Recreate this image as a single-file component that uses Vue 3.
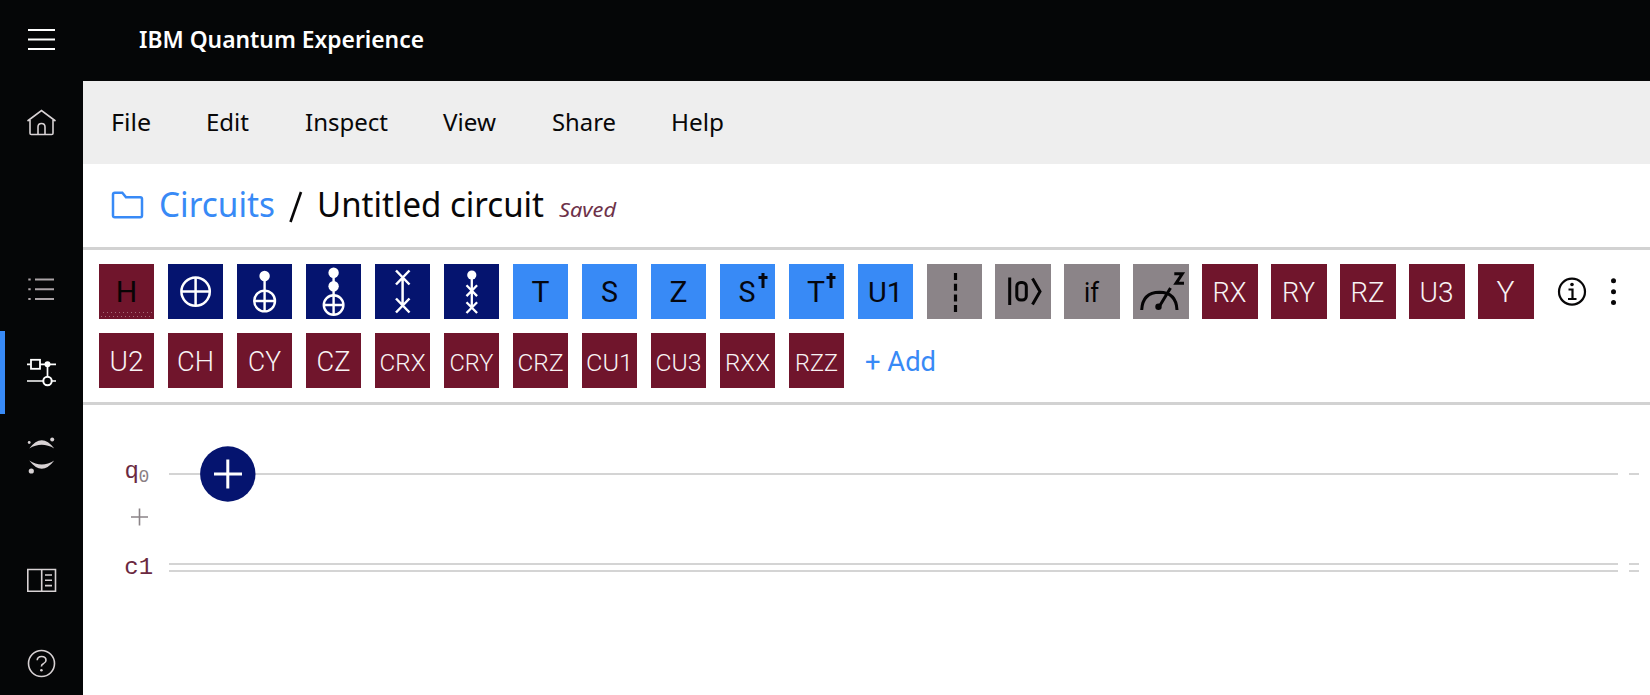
<script setup>
const menu = [
  { label: 'File', w: 40, gap: 55 },
  { label: 'Edit', w: 43, gap: 56 },
  { label: 'Inspect', w: 83, gap: 55 },
  { label: 'View', w: 53, gap: 56 },
  { label: 'Share', w: 64, gap: 54.5 },
  { label: 'Help', w: 53, gap: 0 },
]

const word = (t, w, kind = 'maroon', size = 27, y = 38, x = 27.5) => ({ t, w, kind, size, y, x })
const glyph = (icon, kind) => ({ icon, kind })

const rows = [
  [
    glyph('h', 'maroon'),
    glyph('not', 'navy'),
    glyph('cnot', 'navy'),
    glyph('ccnot', 'navy'),
    glyph('swap', 'navy'),
    glyph('cswap', 'navy'),
    word('T', 18, 'blue', 30),
    word('S', 17, 'blue', 30),
    word('Z', 18, 'blue', 30),
    { ...word('S', 17, 'blue', 30, 38, 27), dagger: 43 },
    { ...word('T', 18, 'blue', 30, 38, 27), dagger: 42 },
    word('U1', 35, 'blue', 28),
    glyph('barrier', 'gray'),
    glyph('reset', 'gray'),
    word('if', 15, 'gray', 27),
    glyph('measure', 'gray'),
    word('RX', 34),
    word('RY', 33),
    word('RZ', 34),
    word('U3', 34),
    word('Y', 18, 'maroon', 30),
  ],
  [
    word('U2', 34, 'maroon', 27),
    word('CH', 37, 'maroon', 27),
    word('CY', 33, 'maroon', 27),
    word('CZ', 34, 'maroon', 27),
    word('CRX', 46, 'maroon', 24),
    word('CRY', 44, 'maroon', 24),
    word('CRZ', 46, 'maroon', 24),
    word('CU1', 47, 'maroon', 24),
    word('CU3', 46, 'maroon', 24),
    word('RXX', 45, 'maroon', 24),
    word('RZZ', 43, 'maroon', 24),
  ],
]
</script>

<template>
  <div class="shell">
    <header class="topbar">
      <button class="navbtn" aria-label="Menu">
        <svg width="83" height="81" class="bright"><path d="M28 30h27M28 39.5h27M28 49h27" stroke-width="2" /></svg>
      </button>
      <svg class="brand" width="290" height="81">
        <text x="0" y="48" textLength="285" lengthAdjust="spacingAndGlyphs">IBM Quantum Experience</text>
      </svg>
    </header>

    <div class="body">
      <nav class="side">
        <a class="item home">
          <svg width="83" height="83">
            <path d="M27.5 40 41.5 29.5 55.5 40M30 39v13.2q0 1.3 1.3 1.3h20.4q1.3 0 1.3-1.3V39M38 53V46q0-3.5 3.5-3.5T45 46v7" />
          </svg>
        </a>
        <a class="item">
          <svg width="83" height="83">
            <path d="M28.3 31.5h2.4M28.3 41.3h2.4M28.3 51h2.4M35 31.5h19M35 41.3h19M35 51h19" class="dim" stroke-width="2" />
          </svg>
        </a>
        <a class="item active">
          <svg width="83" height="83" class="bright">
            <path d="M27 33.3h3.5M40 33.3h16M27 50h16M52 50h4M47.5 34v11.5" stroke-width="1.7" />
            <rect x="31" y="28.8" width="9" height="9" stroke-width="1.8" />
            <circle cx="47.5" cy="33.3" r="3" fill="#fff" stroke="none" />
            <circle cx="47.5" cy="50" r="4.2" stroke-width="2" />
          </svg>
        </a>
        <a class="item">
          <svg width="83" height="83" class="solid">
            <path d="M29.3 34.5Q41.7 18 54.3 34.5 41.7 27 29.3 34.5ZM29.3 46.5Q41.7 63 54.3 46.5 41.7 54.5 29.3 46.5Z" />
            <circle cx="29.2" cy="28.5" r="1.4" />
            <circle cx="52.2" cy="25.6" r="2" />
            <circle cx="31.3" cy="57" r="2.6" />
          </svg>
        </a>
        <a class="item docs">
          <svg width="83" height="83">
            <path d="M27.8 30.5h27.7v21.7H27.8zM41.7 30.5v21.7M45 36h7M45 41.3h7M45 46.6h7" />
          </svg>
        </a>
        <a class="item">
          <svg width="83" height="83">
            <circle cx="41.5" cy="41.5" r="13" />
            <path d="M37.2 38.3q.2-3.8 4.4-3.8 4.4 0 4.4 3.7 0 2-2.3 3.2-2.3 1-2.3 3.2" />
            <circle cx="41.4" cy="48.2" r="1.3" fill="#d8d2d4" stroke="none" />
          </svg>
        </a>
      </nav>

      <main>
        <div class="menubar">
          <svg v-for="m in menu" :key="m.label" :width="m.w" height="83" :style="{ marginRight: m.gap + 'px' }">
            <text x="0" y="50" :textLength="m.w" lengthAdjust="spacingAndGlyphs">{{ m.label }}</text>
          </svg>
        </div>

        <div class="crumbs">
          <svg class="folder" width="34" height="30">
            <path d="M2 4.5q0-1.8 1.8-1.8h7.5L15 7.2h14.2q1.8 0 1.8 1.8v16.4q0 1.8-1.8 1.8H3.8Q2 27.2 2 25.4Z" />
          </svg>
          <svg class="link" width="116" height="83"><text y="53" textLength="116" lengthAdjust="spacingAndGlyphs">Circuits</text></svg>
          <svg class="slash" width="14" height="83"><path d="M1.5 58 12 28" /></svg>
          <svg class="name" width="227" height="83"><text y="53" textLength="227" lengthAdjust="spacingAndGlyphs">Untitled circuit</text></svg>
          <svg class="saved" width="57" height="83"><text y="53" textLength="57" lengthAdjust="spacingAndGlyphs">Saved</text></svg>
        </div>

        <section class="palette">
          <div v-for="(row, ri) in rows" :key="ri" class="row">
            <div v-for="(g, i) in row" :key="i" class="gate" :class="g.kind">
              <svg viewBox="0 0 55 55" width="55" height="55">
                <template v-if="g.t">
                  <text :x="g.x - g.w / 2" :y="g.y" :font-size="g.size" :textLength="g.w" lengthAdjust="spacingAndGlyphs">{{ g.t }}</text>
                  <path v-if="g.dagger" :d="`M${g.dagger} 9v15M${g.dagger - 4.5} 13.5h9`" stroke-width="3" />
                </template>
                <g v-else-if="g.icon === 'h'">
                  <text x="16.8" y="38" font-size="29.5" textLength="21.5" lengthAdjust="spacingAndGlyphs" class="ink">H</text>
                  <path d="M4 48.5h50M2 52.5h52" class="grain" />
                </g>
                <g v-else-if="g.icon === 'not'" stroke-width="2.5">
                  <circle cx="27.6" cy="27.6" r="14.2" /><path d="M27.6 13v29M13 27.6h29" />
                </g>
                <g v-else-if="g.icon === 'cnot'" stroke-width="2.4">
                  <circle cx="27.6" cy="12" r="5.2" class="fill" /><circle cx="27.6" cy="37" r="10.4" />
                  <path d="M27.6 12v36M17 37h21" />
                </g>
                <g v-else-if="g.icon === 'ccnot'" stroke-width="2.4">
                  <circle cx="27.6" cy="8.7" r="5.2" class="fill" /><circle cx="27.6" cy="22.3" r="5.2" class="fill" />
                  <circle cx="27.6" cy="41" r="9.8" /><path d="M27.6 9v42M18 41h19.5" />
                </g>
                <g v-else-if="g.icon === 'swap'" stroke-width="2.5">
                  <path d="M27.6 13.5v28M21 6.5l13.5 14M34.5 6.5 21 20.5M21 34.5l13.5 14M34.5 34.5 21 48.5" />
                </g>
                <g v-else-if="g.icon === 'cswap'" stroke-width="2.3">
                  <circle cx="27.8" cy="11" r="4.6" class="fill" />
                  <path d="M27.8 11v33M22.5 21.3l10.6 10.8M33.1 21.3 22.5 32.1M22.5 38.2 33.1 49M33.1 38.2 22.5 49" />
                </g>
                <path v-else-if="g.icon === 'barrier'" d="M28.5 9v39" stroke-width="3.2" stroke-dasharray="7 3.7" />
                <g v-else-if="g.icon === 'reset'">
                  <path d="M14.7 13.5v27.5M37.5 14.5 45 27.5 37.5 40.5" stroke-width="3" />
                  <rect x="21.8" y="18.5" width="9.5" height="17.5" rx="4" stroke-width="3" />
                </g>
                <g v-else-if="g.icon === 'measure'">
                  <path d="M8.7 46Q9.5 28.5 26.5 28.3 43.2 28.5 44 46M26 43 37.5 24" stroke-width="3" />
                  <circle cx="25.5" cy="42.7" r="3.2" class="fill" />
                  <path d="M41.3 9.8h8L43 19.3h8" stroke-width="3" />
                </g>
              </svg>
            </div>
            <svg v-if="ri === 0" class="tools" width="70" height="55">
              <circle cx="19" cy="27.7" r="13" />
              <path d="M15.5 25.5h4v9M15 35h8.5" />
              <circle cx="19" cy="20.5" r="1.8" class="dot" />
              <circle cx="60.5" cy="16.7" r="2.5" class="dot" /><circle cx="60.5" cy="27.7" r="2.5" class="dot" /><circle cx="60.5" cy="38.5" r="2.5" class="dot" />
            </svg>
            <svg v-else class="add" width="72" height="55"><text y="37.7" textLength="71" lengthAdjust="spacingAndGlyphs">+ Add</text></svg>
          </div>
        </section>

        <svg class="circuit" width="1567" height="290">
          <path class="wire" d="M86 69h1449M1546 69h10M86 159h1449M1546 159h10M86 166h1449M1546 166h10" />
          <text x="41.5" y="73" class="reg">q</text>
          <text x="55.5" y="77" class="sub">0</text>
          <path d="M48 112h17M56.5 103.5v17" class="addq" />
          <text x="41.3" y="169.3" class="reg">c1</text>
          <circle cx="144.8" cy="69" r="27.7" class="node" />
          <path d="M131 69h28M144.8 54.5v29" class="plus" />
        </svg>
      </main>
    </div>
  </div>
</template>

<style>
body { margin: 0; background: #fff; overflow: hidden; }
</style>

<style scoped>
.shell { width: 1650px; height: 695px; overflow: hidden; display: flex; flex-direction: column; font-family: "Noto Sans", sans-serif; }
svg { display: block; flex: none; overflow: visible; }
.topbar { height: 81px; flex: none; background: #050607; display: flex; }
.navbtn { width: 83px; padding: 0; border: 0; background: none; }
.navbtn svg, .side svg { fill: none; stroke: #d8d2d4; stroke-width: 1.6; }
.navbtn svg.bright, .side svg.bright { stroke: #fff; }
.side svg.solid { fill: #d8d2d4; stroke: none; }
.dim { stroke: #aaa3a6; }
.brand { margin-left: 55.5px; fill: #fff; font-size: 23.5px; font-weight: 600; }
.body { flex: 1; display: flex; min-height: 0; }
.side { width: 83px; flex: none; background: #050607; display: flex; flex-direction: column; }
.item { height: 83px; flex: none; box-sizing: border-box; }
.home { margin-bottom: 84px; }
.docs { margin-top: 42px; }
.active { box-shadow: inset 5px 0 #388af6; }
main { width: 1567px; background: #fff; }
.menubar { height: 83px; box-sizing: border-box; padding-left: 28px; background: #eee; display: flex; fill: #080708; font-size: 23.5px; }
.crumbs { height: 86px; box-sizing: border-box; padding-left: 28px; border-bottom: 3px solid #d2d2d2; display: flex; font-size: 34px; }
.folder { margin-top: 25.5px; fill: none; stroke: #388af6; stroke-width: 2.5; }
.link { margin-left: 14px; fill: #388af6; }
.slash { margin-left: 14px; stroke: #080708; stroke-width: 2.6; }
.name { margin-left: 14px; fill: #080708; }
.saved { margin-left: 14.5px; fill: #6d3149; font-size: 20px; font-style: italic; }
.palette { height: 155px; box-sizing: border-box; padding: 14px 0 0 15.7px; border-bottom: 3px solid #d2d2d2; display: flex; flex-direction: column; gap: 14px; font-family: Roboto, sans-serif; }
.row { display: flex; gap: 13.8px; height: 55px; }
.gate { width: 55.2px; height: 55px; flex: none; --ink: #fff; }
.gate svg { fill: none; stroke: var(--ink); }
.gate text { fill: var(--ink); stroke: none; font-weight: 400; }
.gate.maroon text { font-weight: 300; }
.gate .fill { fill: var(--ink); stroke: none; }
.gate text.ink { fill: #080405; font-weight: 400; }
.grain { stroke: #a66b79; stroke-width: 1; stroke-dasharray: 1 3; }
.maroon { background: #70152c; --ink: #f8f3f4; }
.navy { background: #05146f; }
.blue { background: #388af6; --ink: #05070f; }
.gray { background: #8b8488; --ink: #050405; }
.tools { margin-left: 6px; fill: none; stroke: #080708; stroke-width: 2.2; }
.tools .dot { fill: #080708; stroke: none; }
.add { margin-left: 7.5px; fill: #388af6; font-size: 27px; }
.circuit { fill: none; font-family: "Liberation Mono", monospace; }
.wire { stroke: #d4d4d4; stroke-width: 2; }
.reg { fill: #6b2941; font-size: 24px; }
.sub { fill: #8b7f84; font-size: 18px; }
.addq { stroke: #8b8488; stroke-width: 1.6; }
.node { fill: #05146f; }
.plus { stroke: #fff; stroke-width: 3; }
</style>
